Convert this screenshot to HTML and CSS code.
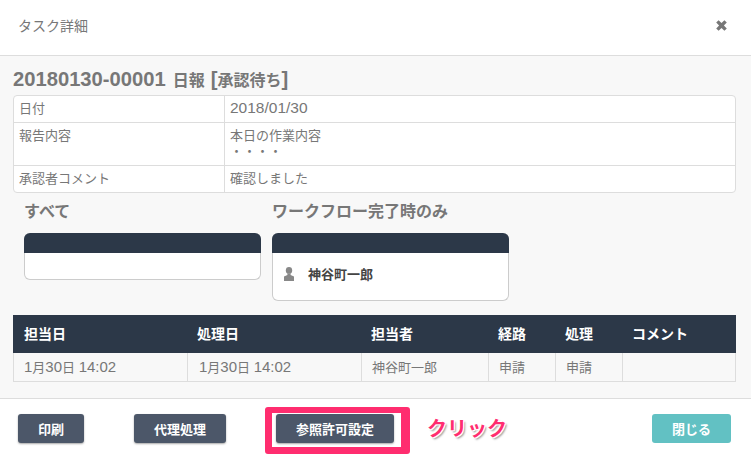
FILE: index.html
```html
<!DOCTYPE html>
<html lang="ja">
<head>
    <meta charset="UTF-8">
    <meta name="viewport" content="width=device-width, initial-scale=1.0">
    <title>タスク詳細</title>
    <link rel="stylesheet" href="styles.css">
</head>
<body>

    <!-- ヘッダー -->
    <div class="modal-header">
        <span class="modal-title">タスク詳細</span>
        <svg class="close-icon" width="11" height="11" viewBox="0 0 11 11">
            <path d="M2.6 0.2 L5.5 3.1 L8.4 0.2 L10.8 2.6 L7.9 5.5 L10.8 8.4 L8.4 10.8 L5.5 7.9 L2.6 10.8 L0.2 8.4 L3.1 5.5 L0.2 2.6 Z" fill="#777"/>
        </svg>
    </div>

    <div class="modal-body">
        <h2 class="task-title"><span class="num">20180130-00001 </span>日報 <span class="num">[</span>承認待ち<span class="num">]</span></h2>

        <table class="detail-table">
            <tr>
                <td class="detail-label">日付</td>
                <td><span class="num">2018/01/30</span></td>
            </tr>
            <tr>
                <td class="detail-label">報告内容</td>
                <td>本日の作業内容<br>・・・・</td>
            </tr>
            <tr>
                <td class="detail-label">承認者コメント</td>
                <td>確認しました</td>
            </tr>
        </table>

        <!-- 参照者 -->
        <div class="viewers">
            <div class="viewer-col">
                <h3>すべて</h3>
                <div class="viewer-box">
                    <div class="viewer-head"></div>
                    <div class="viewer-list"></div>
                </div>
            </div>
            <div class="viewer-col">
                <h3>ワークフロー完了時のみ</h3>
                <div class="viewer-box">
                    <div class="viewer-head"></div>
                    <div class="viewer-list">
                        <div class="viewer-user">
                            <svg class="user-icon" width="10" height="14" viewBox="0 0 10 14">
                                <ellipse cx="5" cy="3.4" rx="3.2" ry="3.4" fill="#888"/>
                                <path d="M3.4 6.5 H6.6 V8 L10 9.6 V14 H0 V9.6 L3.4 8 Z" fill="#888"/>
                            </svg>
                            <span>神谷町一郎</span>
                        </div>
                    </div>
                </div>
            </div>
        </div>

        <!-- 履歴 -->
        <table class="history-table">
            <colgroup>
                <col class="col-first"><col class="col-date"><col class="col-user">
                <col class="col-step"><col class="col-step"><col>
            </colgroup>
            <thead>
                <tr>
                    <th>担当日</th>
                    <th>処理日</th>
                    <th>担当者</th>
                    <th>経路</th>
                    <th>処理</th>
                    <th>コメント</th>
                </tr>
            </thead>
            <tbody>
                <tr>
                    <td><span class="num">1</span>月<span class="num">30</span>日 <span class="num">14:02</span></td>
                    <td><span class="num">1</span>月<span class="num">30</span>日 <span class="num">14:02</span></td>
                    <td class="td-tight">神谷町一郎</td>
                    <td class="td-tight">申請</td>
                    <td class="td-tight">申請</td>
                    <td></td>
                </tr>
            </tbody>
        </table>
    </div>

    <div class="modal-footer">
        <button class="btn btn-print">印刷</button>
        <button class="btn btn-proxy">代理処理</button>
        <div class="highlighted">
            <button class="btn btn-permit">参照許可設定</button>
            <div class="highlight-box"></div>
        </div>
        <span class="click-note">クリック</span>
        <button class="btn btn-close">閉じる</button>
    </div>

</body>
</html>
```

FILE: styles.css
```css
html, body {
    height: 100%;
}

body {
    font-family: 'Liberation Sans', 'Noto Sans CJK JP', sans-serif;
    margin: 0;
    background: white;
    color: #777;
    font-size: 13px;
    overflow: hidden;
}

.modal-header {
    height: 56px;
    box-sizing: border-box;
    border-bottom: 1px solid #ddd;
    display: flex;
    align-items: center;
    justify-content: space-between;
    padding: 0 24px 6px 18px;
}

.modal-title {
    font-size: 14px;
}

.close-icon {
    margin-top: 2px;
}

.modal-body {
    background: #f8f8f8;
    height: 343px;
    box-sizing: border-box;
    padding: 14px 15px 0 13px;
    border-bottom: 1px solid #ddd;
}

/* 数字は和文より大きく見えるので別サイズ */
.num {
    line-height: 0;
}

.task-title {
    margin: 0 0 3px;
    font-size: 16px;
    line-height: 22px;
    font-weight: bold;
    word-spacing: 1.5px;
}

.task-title .num {
    font-size: 20.2px;
}

.detail-table .num {
    font-size: 15.5px;
}

.history-table .num {
    font-size: 15px;
}

table {
    border-collapse: separate;
    border-spacing: 0;
    table-layout: fixed;
    width: 723px;
}

.detail-table {
    background: white;
    border: 1px solid #ddd;
    border-radius: 4px;
}

.detail-table td {
    padding: 5px 6px 5px 5px;
    line-height: 16px;
    vertical-align: top;
    border-top: 1px solid #ddd;
}

.detail-table tr:first-child td {
    border-top: none;
}

.detail-label {
    width: 199px;
    border-right: 1px solid #ddd;
}

.viewers {
    display: flex;
    gap: 11px;
    margin: 8px 0 0 11px;
}

.viewer-col {
    width: 237px;
}

.viewer-col h3 {
    margin: 0 0 10px;
    font-size: 16px;
    line-height: 22px;
}

.viewer-box {
    background: white;
    border: 1px solid #ccc;
    border-top: none;
    border-radius: 6px;
}

.viewer-head {
    height: 20px;
    margin: 0 -1px;
    background: #2c3848;
    border-radius: 6px 6px 0 0;
}

.viewer-list {
    min-height: 26px;
}

.viewer-user {
    display: flex;
    align-items: center;
    gap: 14px;
    height: 47px;
    padding: 0 0 7px 11px;
    box-sizing: border-box;
    font-size: 13px;
    font-weight: bold;
    color: #444;
}

.user-icon {
    margin-top: 1px;
}

.history-table {
    margin-top: 14px;
}

.col-first { width: 175px; }
.col-date { width: 174px; }
.col-user { width: 127px; }
.col-step { width: 67px; }

.history-table th {
    background: #2c3848;
    color: white;
    height: 38px;
    padding: 0 9px 2px;
    box-sizing: border-box;
    text-align: left;
    font-size: 14px;
}

.history-table th:first-child {
    padding-left: 11px;
}

.history-table td {
    height: 29px;
    padding: 0 11px 1px;
    border-bottom: 1px solid #ddd;
    border-right: 1px solid #ddd;
    box-sizing: border-box;
}

.history-table td:first-child {
    border-left: 1px solid #ddd;
    padding-left: 10px;
}

.history-table .td-tight {
    padding-left: 10px;
}

.modal-footer {
    display: flex;
    align-items: center;
    height: 55px;
    padding: 4px 20px 0 18px;
    box-sizing: border-box;
}

.btn {
    height: 29px;
    border: none;
    border-radius: 3px;
    background: #4c5769;
    color: white;
    font-family: 'Noto Sans CJK JP', sans-serif;
    font-size: 13px;
    font-weight: bold;
    padding: 0;
    box-shadow: 0 1px 2px rgba(0,0,0,0.35);
}

.btn-print { width: 66px; margin-right: 50px; }
.btn-proxy { width: 92px; margin-right: 50px; }
.btn-permit { width: 118px; display: block; }

.btn-close {
    width: 79px;
    margin-left: auto;
    background: #62c1c3;
    box-shadow: none;
}

.highlighted {
    position: relative;
}

/* 赤枠の注釈 */
.highlight-box {
    position: absolute;
    left: -11px;
    top: -7px;
    width: 145px;
    height: 47px;
    box-sizing: border-box;
    border: solid #ff2d6f;
    border-width: 6px 9px 7px 7px;
    border-radius: 3px;
}

.click-note {
    margin-left: 33px;
    margin-bottom: 3px;
    font-family: 'Noto Sans CJK JP', sans-serif;
    font-size: 20px;
    font-weight: bold;
    color: #ff2d6f;
    text-shadow: 1px 1px 0 white, -1px -1px 0 white, 1px -1px 0 white, -1px 1px 0 white, 2px 2px 2px #999;
}
```
